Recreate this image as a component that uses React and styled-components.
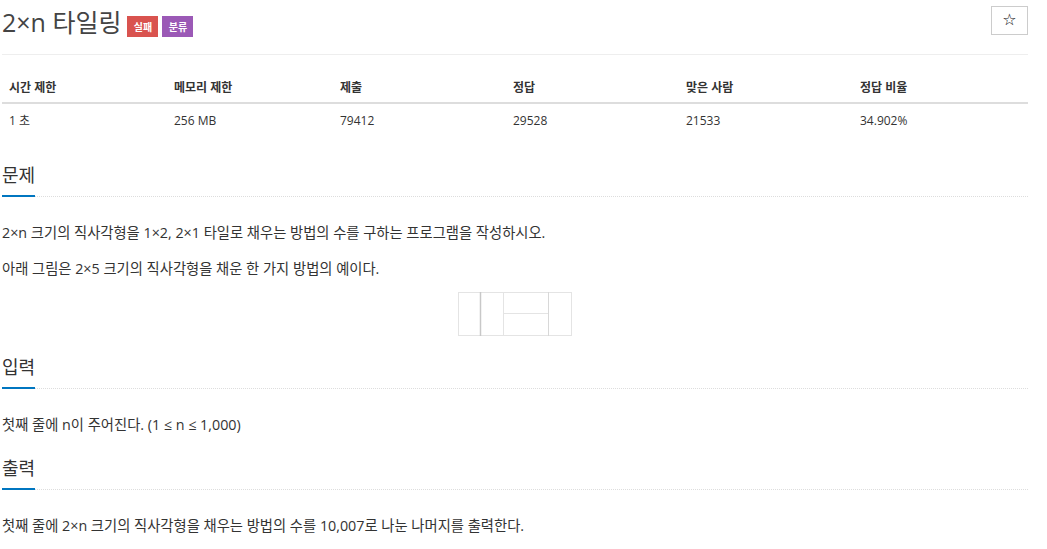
import React from 'react'
import styled, { createGlobalStyle } from "styled-components";

const GlobalStyle = createGlobalStyle`
  body {
    margin: 0;
    background: #fff;
    color: #333;
    font-family: "Open Sans", "Noto Sans CJK KR", sans-serif;
  }
`;

const Page = styled.div`
  display: flex;
  flex-direction: column;
  padding: 0 19px 0 2px;
`;

const TitleRow = styled.div`
  display: flex;
  align-items: flex-start;
  justify-content: space-between;
  height: 54px;
  border-bottom: 1px solid #eee;
`;

const TitleLeft = styled.div`
  display: flex;
  align-items: flex-start;
  padding-top: 7px;
`;

const Title = styled.h1`
  margin: 0 6px 0 0;
  font-size: 25px;
  font-weight: 400;
  line-height: 30px;
  color: #444;
`;

const Label = styled.span`
  display: inline-flex;
  align-items: center;
  justify-content: center;
  width: 31px;
  height: 21px;
  margin: 9px 4px 0 0;
  background: ${(props) => props.color};
  color: #fff;
  font-size: 10px;
  font-weight: 700;
`;

const StarButton = styled.button`
  margin-top: 6px;
  width: 37px;
  height: 29px;
  padding: 0 0 2px;
  border: 1px solid #ccc;
  background: #fff;
  color: #111;
  font-size: 16px;
  font-family: "DejaVu Sans", sans-serif;
  line-height: 1;
`;

const Table = styled.table`
  width: 100%;
  table-layout: fixed;
  margin: 16px 0 20px;
  border-collapse: collapse;
  font-size: 12px;
`;

const Th = styled.th`
  box-sizing: border-box;
  width: ${(props) => props.w || "auto"};
  text-align: left;
  padding: 8px 7px 5px;
  line-height: 18px;
  font-weight: 700;
  border-bottom: 2px solid #ddd;
`;

const Td = styled.td`
  padding: 8px 7px;
  line-height: 18px;
`;

const SectionBox = styled.section`
  display: flex;
  flex-direction: column;
`;

const Headline = styled.div`
  margin-top: 4px;
  border-bottom: 1px dotted #ddd;
`;

const H2 = styled.h2`
  display: inline-block;
  margin: 0 0 -1px;
  padding-bottom: 7px;
  font-size: 18px;
  font-weight: 400;
  line-height: 26px;
  color: #333;
  border-bottom: 2px solid #0076c0;
`;

const Body = styled.div`
  padding-top: 26px;
  font-size: 14.3px;
`;

const P = styled.p`
  margin: 0 0 16px;
  line-height: 20px;
`;

const Figure = styled.div`
  display: flex;
  justify-content: center;
  margin: -3px 0 14px;
`;

const Tiling = () => (
  <svg width="114" height="44" viewBox="0 0 114 44">
    <g fill="none" stroke="#e4e4e4" strokeWidth="1">
      <rect x="0.5" y="0.5" width="113" height="43" />
      <line x1="45.5" y1="0" x2="45.5" y2="44" />
      <line x1="90.5" y1="0" x2="90.5" y2="44" stroke="#d8d8d8" />
      <line x1="45" y1="21.5" x2="90" y2="21.5" />
    </g>
    <line x1="22.5" y1="0" x2="22.5" y2="44" stroke="#c8c8c8" strokeWidth="1.5" />
  </svg>
);

const Section = ({ title, children }) => (
  <SectionBox>
    <Headline>
      <H2>{title}</H2>
    </Headline>
    <Body>{children}</Body>
  </SectionBox>
);

const App = () => {
  return (
    <Page>
      <GlobalStyle />
      <TitleRow>
        <TitleLeft>
          <Title>2×n 타일링</Title>
          <Label color="#d9534f">실패</Label>
          <Label color="#9b59b6">분류</Label>
        </TitleLeft>
        <StarButton>☆</StarButton>
      </TitleRow>
      <Table>
        <thead>
          <tr>
            <Th w="165px">시간 제한</Th>
            <Th w="166px">메모리 제한</Th>
            <Th w="173px">제출</Th>
            <Th w="173px">정답</Th>
            <Th w="174px">맞은 사람</Th>
            <Th>정답 비율</Th>
          </tr>
        </thead>
        <tbody>
          <tr>
            <Td>1 초</Td>
            <Td>256 MB</Td>
            <Td>79412</Td>
            <Td>29528</Td>
            <Td>21533</Td>
            <Td>34.902%</Td>
          </tr>
        </tbody>
      </Table>
      <Section title="문제">
        <P>2×n 크기의 직사각형을 1×2, 2×1 타일로 채우는 방법의 수를 구하는 프로그램을 작성하시오.</P>
        <P>아래 그림은 2×5 크기의 직사각형을 채운 한 가지 방법의 예이다.</P>
        <Figure>
          <Tiling />
        </Figure>
      </Section>
      <Section title="입력">
        <P>첫째 줄에 n이 주어진다. (1 ≤ n ≤ 1,000)</P>
      </Section>
      <Section title="출력">
        <P>첫째 줄에 2×n 크기의 직사각형을 채우는 방법의 수를 10,007로 나눈 나머지를 출력한다.</P>
      </Section>
    </Page>
  )
}

export default App
